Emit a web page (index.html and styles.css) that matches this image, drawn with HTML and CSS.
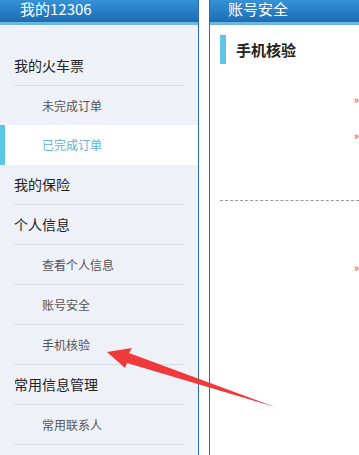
FILE: index.html
```html
<!DOCTYPE html>
<html lang="zh-CN">

<head>
    <meta charset="UTF-8">
    <meta name="viewport" content="width=device-width, initial-scale=1.0">
    <title>账号安全 - 手机核验</title>
    <link rel="stylesheet" href="styles.css">
</head>

<body>
    <div class="page">
        <div class="sidebar">
            <div class="panel-head">我的12306</div>
            <ul class="menu">
                <li class="menu-title">我的火车票</li>
                <li class="menu-item">未完成订单</li>
                <li class="menu-item active">已完成订单</li>
                <li class="menu-title">我的保险</li>
                <li class="menu-title">个人信息</li>
                <li class="menu-item">查看个人信息</li>
                <li class="menu-item">账号安全</li>
                <li class="menu-item">手机核验</li>
                <li class="menu-title">常用信息管理</li>
                <li class="menu-item">常用联系人</li>
            </ul>
        </div>

        <div class="main">
            <div class="panel-head">账号安全</div>
            <div class="content">
                <h2 class="section-title">手机核验</h2>
                <div class="field field-first"><span class="req">»</span></div>
                <div class="field"><span class="req">»</span></div>
                <div class="split"></div>
                <div class="field"><span class="req">»</span></div>
            </div>
        </div>
    </div>

    <!-- 标注箭头 -->
    <svg class="arrow" width="359" height="455" viewBox="0 0 359 455">
        <polygon points="107,352 132,348 129,353 275,407 127,363 125,368" fill="#f0393a" />
    </svg>
</body>

</html>
```

FILE: styles.css
```css
body {
    margin: 0;
    height: 455px;
    overflow: hidden;
    font-family: 'Microsoft YaHei', 'Noto Sans CJK SC', sans-serif;
    background-color: white;
    position: relative;
}

.page {
    display: flex;
    height: 455px;
}

.sidebar {
    width: 198px;
    border-right: 1px solid #2b6ca9;
    background-color: #eef1f8;
    margin-right: 10px;
}

.main {
    flex: 1;
    border-left: 1px solid #2b6ca9;
    overflow: hidden;
}

.panel-head {
    height: 22px;
    line-height: 18px;
    padding-left: 20px;
    font-size: 15px;
    color: white;
    background: linear-gradient(#3592d6, #1d6cb3);
    border-bottom: 3px solid #6db6e2;
}

.main .panel-head {
    padding-left: 18px;
}

.menu {
    list-style: none;
    margin: 0;
    padding: 21px 0 0 0;
}

.menu li {
    height: 39px;
    line-height: 39px;
    margin: 0 14px;
    border-bottom: 1px solid #d9dce3;
}

.menu-title {
    font-size: 14px;
    color: #222;
}

.menu-item {
    font-size: 12px;
    color: #555;
    padding-left: 28px;
}

.menu li.active {
    margin: -1px 0 0 0;
    height: 40px;
    line-height: 40px;
    border-bottom: none;
    border-left: 5px solid #5fc4e6;
    padding-left: 37px;
    background-color: white;
    color: #5bb3d8;
}

.content {
    padding: 10px 0 0 10px;
}

.section-title {
    margin: 0;
    height: 29px;
    line-height: 29px;
    border-left: 6px solid #5fc4e6;
    padding-left: 10px;
    font-size: 15px;
    font-weight: bold;
    color: #222;
}

.field {
    height: 36px;
    line-height: 36px;
    text-align: right;
}

.field-first {
    margin-top: 15px;
}

.req {
    color: #e03a1a;
    font-size: 11px;
    margin-right: 0;
}

.split {
    margin-top: 49px;
    border-top: 1px dashed #999;
    height: 46px;
}

.arrow {
    position: absolute;
    left: 0;
    top: 0;
}
```
